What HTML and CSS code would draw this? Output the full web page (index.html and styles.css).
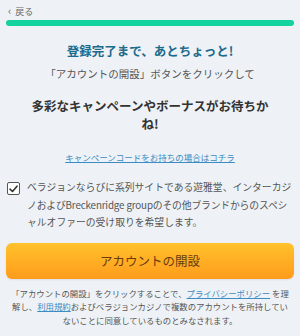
FILE: index.html
```html
<!DOCTYPE html>
<html lang="ja">
<head>
<meta charset="utf-8">
<link rel="stylesheet" href="styles.css">
</head>
<body>
<div class="page">
  <div class="top">
    <a class="back" href="#"><span class="chev">&lsaquo;</span> 戻る</a>
    <div class="progress"></div>
  </div>
  <h1 class="title">登録完了まで、あとちょっと!</h1>
  <p class="sub">「アカウントの開設」ボタンをクリックして</p>
  <p class="promo">多彩なキャンペーンやボーナスがお待ちか<br>ね!</p>
  <p class="code"><a href="#">キャンペーンコードをお持ちの場合はコチラ</a></p>
  <label class="consent">
    <span class="box"><svg width="9" height="8" viewBox="0 0 9 8"><path d="M1 4.2 L3.5 6.5 L8 1.2" fill="none" stroke="#333" stroke-width="1.6" stroke-linecap="round" stroke-linejoin="round"/></svg></span>
    <span class="ctext">ベラジョンならびに系列サイトである遊雅堂、インターカジ<br><span class="tight">ノおよびBreckenridge groupのその他ブランドからのスペシ</span><br>ャルオファーの受け取りを希望します。</span>
  </label>
  <button class="cta">アカウントの開設</button>
  <p class="legal">「アカウントの開設」をクリックすることで、<a href="#">プライバシーポリシー</a> を理<br>解し、<a href="#">利用規約</a>およびベラジョンカジノで複数のアカウントを所持してい<br>ないことに同意しているものとみなされます。</p>
</div>
</body>
</html>
```
FILE: styles.css
```css
html, body {
  margin: 0;
  padding: 0;
  background: #eef2f6;
}
body {
  font-family: "Noto Sans CJK JP", "Noto Sans", sans-serif;
  color: #4a4a4a;
}
.page {
  width: 300px;
  height: 336px;
  padding: 4px 6px 0 6px;
  box-sizing: border-box;
  display: flex;
  flex-direction: column;
}
.top {
  display: flex;
  flex-direction: column;
}
.back {
  font-size: 9px;
  line-height: 12px;
  color: #666;
  text-decoration: none;
  padding-left: 2px;
}
.chev {
  font-size: 11px;
  margin-right: 2px;
}
.progress {
  margin-top: 2px;
  height: 6px;
  border-radius: 3px;
  background: #12d29d;
}
.title {
  margin: 16px 0 0 0;
  text-align: center;
  font-size: 12.5px;
  line-height: 18px;
  font-weight: 700;
  color: #1d6b8c;
}
.sub {
  margin: 6px 0 0 0;
  text-align: center;
  font-size: 10.5px;
  line-height: 16px;
  color: #555;
}
.promo {
  margin: 15px 0 0 0;
  text-align: center;
  font-size: 12.5px;
  line-height: 18px;
  font-weight: 700;
  color: #333;
}
.code {
  margin: 18px 0 0 0;
  text-align: center;
  font-size: 8.5px;
  line-height: 12px;
}
.code a, .legal a {
  color: #3a8cc2;
  text-decoration: underline;
}
.consent {
  margin-top: 16px;
  display: flex;
  gap: 7px;
  align-items: flex-start;
}
.box {
  flex: none;
  width: 11px;
  height: 11px;
  margin-top: 3px;
  margin-left: 1px;
  border: 1.5px solid #555;
  border-radius: 2px;
  display: flex;
  align-items: center;
  justify-content: center;
  background: #fff;
}
.ctext {
  font-size: 9.8px;
  line-height: 17.5px;
  color: #555;
  white-space: nowrap;
}
.tight {
  letter-spacing: -0.15px;
}
.cta {
  margin-top: 11px;
  height: 36px;
  flex: none;
  border: none;
  border-radius: 6px;
  background: linear-gradient(#ffc22c, #ff9b1b);
  color: #6a3c12;
  font-family: inherit;
  font-size: 12.5px;
  box-shadow: 0 1px 2px rgba(0,0,0,0.08);
}
.legal {
  margin: 8px 0 0 0;
  text-align: center;
  font-size: 8.4px;
  line-height: 13.5px;
  color: #555;
  white-space: nowrap;
}
```
